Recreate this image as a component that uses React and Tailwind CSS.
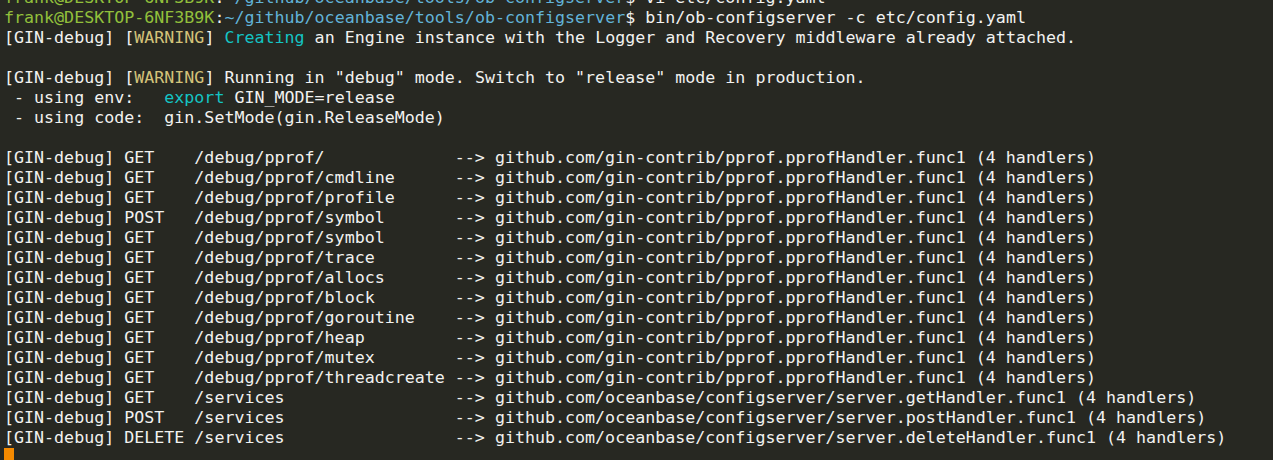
import React from "react";

const G = "text-[#92c03c]";
const B = "text-[#62b3d8]";
const C = "text-[#14c4c4]";
const Y = "text-[#d3c27a]";

function pad(s, n) {
  return s + " ".repeat(Math.max(0, n - s.length));
}

const routes = [
  ["GET", "/debug/pprof/", "github.com/gin-contrib/pprof.pprofHandler.func1"],
  ["GET", "/debug/pprof/cmdline", "github.com/gin-contrib/pprof.pprofHandler.func1"],
  ["GET", "/debug/pprof/profile", "github.com/gin-contrib/pprof.pprofHandler.func1"],
  ["POST", "/debug/pprof/symbol", "github.com/gin-contrib/pprof.pprofHandler.func1"],
  ["GET", "/debug/pprof/symbol", "github.com/gin-contrib/pprof.pprofHandler.func1"],
  ["GET", "/debug/pprof/trace", "github.com/gin-contrib/pprof.pprofHandler.func1"],
  ["GET", "/debug/pprof/allocs", "github.com/gin-contrib/pprof.pprofHandler.func1"],
  ["GET", "/debug/pprof/block", "github.com/gin-contrib/pprof.pprofHandler.func1"],
  ["GET", "/debug/pprof/goroutine", "github.com/gin-contrib/pprof.pprofHandler.func1"],
  ["GET", "/debug/pprof/heap", "github.com/gin-contrib/pprof.pprofHandler.func1"],
  ["GET", "/debug/pprof/mutex", "github.com/gin-contrib/pprof.pprofHandler.func1"],
  ["GET", "/debug/pprof/threadcreate", "github.com/gin-contrib/pprof.pprofHandler.func1"],
  ["GET", "/services", "github.com/oceanbase/configserver/server.getHandler.func1"],
  ["POST", "/services", "github.com/oceanbase/configserver/server.postHandler.func1"],
  ["DELETE", "/services", "github.com/oceanbase/configserver/server.deleteHandler.func1"],
];

function Prompt({ cmd }) {
  return (
    <div className="h-[20px]">
      <span className={G}>frank@DESKTOP-6NF3B9K</span>
      <span>:</span>
      <span className={B}>~/github/oceanbase/tools/ob-configserver</span>
      <span>$ {cmd}</span>
    </div>
  );
}

export default function App() {
  return (
    <div
      className="w-[1273px] h-[460px] overflow-hidden bg-[#272822] text-[#f2f2f0] text-[16.65px] leading-[20px] whitespace-pre"
      style={{ fontFamily: '"DejaVu Sans Mono", "Liberation Mono", monospace' }}
    >
      <div className="mt-[-12px] pl-[4px]">
        <Prompt cmd="vi etc/config.yaml" />
        <Prompt cmd="bin/ob-configserver -c etc/config.yaml" />
        <div className="h-[20px]">
          [GIN-debug] [<span className={Y}>WARNING</span>] <span className={C}>Creating</span> an Engine instance with the Logger and Recovery middleware already attached.
        </div>
        <div className="h-[20px]"> </div>
        <div className="h-[20px]">
          [GIN-debug] [<span className={Y}>WARNING</span>] Running in "debug" mode. Switch to "release" mode in production.
        </div>
        <div className="h-[20px]">
          {" - using env:   "}<span className={C}>export</span> GIN_MODE=release
        </div>
        <div className="h-[20px]">{" - using code:  gin.SetMode(gin.ReleaseMode)"}</div>
        <div className="h-[20px]"> </div>
        {routes.map(([m, p, h], i) => (
          <div key={i} className="h-[20px]">
            {"[GIN-debug] " + pad(m, 6) + " " + pad(p, 25) + " --> " + h + " (4 handlers)"}
          </div>
        ))}
        <div className="h-[20px] flex">
          <span className="inline-block w-[10px] h-[20px] bg-[#f58a00]" />
        </div>
      </div>
    </div>
  );
}
